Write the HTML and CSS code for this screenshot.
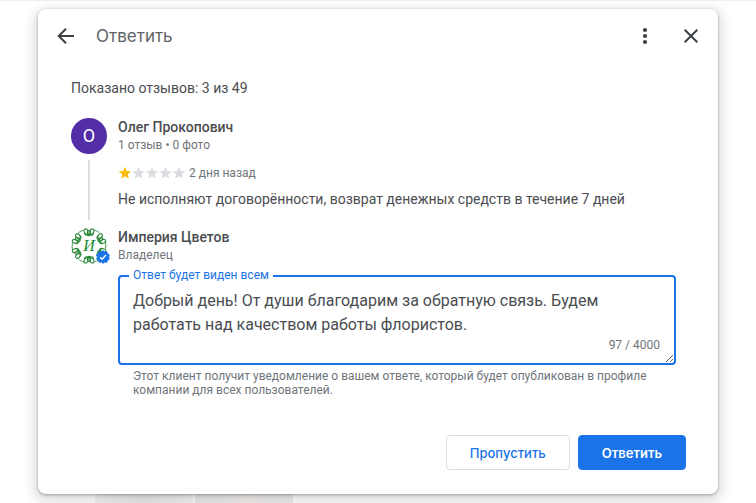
FILE: index.html
```html
<!DOCTYPE html>
<html lang="ru">
<head>
    <meta charset="UTF-8">
    <meta name="viewport" content="width=device-width, initial-scale=1.0">
    <title>Ответить</title>
    <link rel="stylesheet" href="styles.css">
</head>
<body>
    <main class="dialog">
        <header class="dialog-header">
            <button type="button" class="icon-btn" aria-label="Назад">
                <svg width="24" height="24" viewBox="0 0 24 24" fill="none" stroke="#3c4043" stroke-width="2"><path d="M20 12H5.500M12 4.700L4.700 12L12 19.300"/></svg>
            </button>
            <h1>Ответить</h1>
            <button type="button" class="icon-btn" aria-label="Ещё">
                <svg width="24" height="24" viewBox="0 0 24 24" fill="#3c4043"><circle cx="12" cy="6" r="2.100"/><circle cx="12" cy="12" r="2.100"/><circle cx="12" cy="18" r="2.100"/></svg>
            </button>
            <button type="button" class="icon-btn" aria-label="Закрыть">
                <svg width="24" height="24" viewBox="0 0 24 24" fill="none" stroke="#3c4043" stroke-width="2"><path d="M5.700 5.700L18.300 18.300M18.300 5.700L5.700 18.300"/></svg>
            </button>
        </header>

        <p class="summary">Показано отзывов: 3 из 49</p>

        <section class="entry">
            <div class="rail">
                <div class="avatar">О</div>
                <div class="thread-line"></div>
            </div>
            <div class="entry-body">
                <h2>Олег Прокопович</h2>
                <p class="meta">1 отзыв • 0 фото</p>
                <div class="rating">
                    <svg width="68" height="14" viewBox="0 0 68 14" fill="#dadce0" role="img" aria-label="Оценка: 1 из 5">
                        <defs><path id="star" d="M7 .8L8.700 5.100L13.300 5.400L9.700 8.300L10.900 12.800L7 10.300L3.100 12.800L4.300 8.300L.7 5.400L5.300 5.100Z"/></defs>
                        <use href="#star" fill="#fbbc04"/>
                        <use href="#star" x="13.500"/>
                        <use href="#star" x="27"/>
                        <use href="#star" x="40.500"/>
                        <use href="#star" x="54"/>
                    </svg>
                    <span>2 дня назад</span>
                </div>
                <p class="review-text">Не исполняют договорённости, возврат денежных средств в течение 7 дней</p>
            </div>
        </section>

        <section class="entry">
            <div class="rail">
                <div class="shop-logo">
                    <svg width="36" height="36" viewBox="0 0 36 36" fill="none" stroke="#2a8a3a" stroke-width="1.100">
                        <defs>
                            <g id="curl">
                                <path d="M13.500 4.500C13.500 7.800 18 8.200 18 5C18 8.200 22.500 7.800 22.500 4.500"/>
                                <ellipse cx="15" cy="3.500" rx="1.900" ry="2.700" transform="rotate(-20 15 3.500)"/>
                                <ellipse cx="21" cy="3.500" rx="1.900" ry="2.700" transform="rotate(20 21 3.500)"/>
                                <ellipse cx="18" cy="5" rx="1.600" ry="2.600"/>
                            </g>
                            <path id="arc" stroke-width=".8" d="M22.500 2C25 2.200 27 3.500 28.500 5.200"/>
                        </defs>
                        <use href="#curl"/>
                        <use href="#curl" transform="rotate(60 18 18)"/>
                        <use href="#curl" transform="rotate(120 18 18)"/>
                        <use href="#curl" transform="rotate(180 18 18)"/>
                        <use href="#curl" transform="rotate(240 18 18)"/>
                        <use href="#curl" transform="rotate(300 18 18)"/>
                        <use href="#arc"/>
                        <use href="#arc" transform="rotate(60 18 18)"/>
                        <use href="#arc" transform="rotate(120 18 18)"/>
                        <use href="#arc" transform="rotate(180 18 18)"/>
                        <use href="#arc" transform="rotate(240 18 18)"/>
                        <use href="#arc" transform="rotate(300 18 18)"/>
                        <text x="18" y="23" text-anchor="middle" class="logo-letter">И</text>
                    </svg>
                    <svg class="verified" width="14" height="14" viewBox="0 0 14 14">
                        <path fill="#1a73e8" stroke="#1a73e8" stroke-linejoin="round" d="M7 .7L8.700 2L10.800 1.700L11.500 3.700L13.300 4.900L12.600 7L13.300 9.100L11.500 10.300L10.800 12.300L8.700 12L7 13.300L5.300 12L3.200 12.300L2.500 10.300L.7 9.100L1.400 7L.7 4.900L2.500 3.700L3.200 1.700L5.300 2Z"/>
                        <path fill="none" stroke="#fff" stroke-width="1.400" d="M4 7.200L6 9.200L10 5"/>
                    </svg>
                </div>
            </div>
            <form class="entry-body" id="replyForm">
                <h2>Империя Цветов</h2>
                <p class="meta">Владелец</p>
                <div class="field">
                    <label for="reply">Ответ будет виден всем</label>
                    <textarea id="reply" name="reply" maxlength="4000" aria-describedby="replyHint">Добрый день! От души благодарим за обратную связь. Будем работать над качеством работы флористов.</textarea>
                    <span class="counter">97 / 4000</span>
                </div>
                <p class="hint" id="replyHint">Этот клиент получит уведомление о вашем ответе, который будет опубликован в профиле компании для всех пользователей.</p>
            </form>
        </section>

        <footer class="actions">
            <button type="button" class="btn">Пропустить</button>
            <button type="submit" form="replyForm" class="btn btn-primary">Ответить</button>
        </footer>
    </main>

    <div class="backdrop-photos">
        <div class="photo"></div>
        <div class="photo photo-warm"></div>
    </div>
</body>
</html>
```
FILE: styles.css
```css
* {
    box-sizing: border-box;
}

body {
    display: flex;
    flex-direction: column;
    min-height: 100vh;
    margin: 0;
    padding: 8px 38px 0;
    border-top: 1px solid #efefef;
    background-color: #fff;
    color: #4a4d51;
    font-family: Roboto, "Noto Sans", sans-serif;
    font-size: 14px;
    line-height: 20px;
}

h1, h2, p {
    margin: 0;
}

.dialog {
    position: relative;
    padding: 0 32px 24px 33px;
    border-radius: 8px;
    background-color: #fff;
    box-shadow: 0 1px 3px rgba(0, 0, 0, 0.3), 0 4px 12px 4px rgba(0, 0, 0, 0.13);
}

.dialog-header {
    display: flex;
    align-items: center;
    gap: 22px;
    height: 54px;
    margin: 0 -17px;
}

h1 {
    flex: 1;
    margin-left: -4px;
    color: #5f6368;
    font-family: Inter, "Noto Sans", sans-serif;
    font-size: 17px;
    font-weight: 400;
    line-height: 24px;
}

.icon-btn {
    display: flex;
    padding: 0;
    border: none;
    background: none;
    cursor: pointer;
}

.summary {
    padding: 15px 0 20px;
}

.entry {
    display: flex;
    gap: 11px;
}

.rail {
    display: flex;
    flex-direction: column;
    align-items: center;
    width: 36px;
}

.avatar {
    width: 36px;
    height: 36px;
    border-radius: 50%;
    background-color: #512da8;
    color: #fff;
    font-size: 18px;
    line-height: 36px;
    text-align: center;
}

.thread-line {
    flex: 1;
    width: 2px;
    margin: 6px 0 8px;
    background-color: #dadce0;
}

.entry-body {
    flex: 1;
    min-width: 0;
}

h2 {
    font-size: 14px;
    font-weight: 500;
    line-height: 18px;
}

.meta {
    color: #70757a;
    font-size: 12px;
    line-height: 18px;
}

.rating {
    display: flex;
    align-items: center;
    gap: 3px;
    margin-top: 10px;
    color: #70757a;
    font-size: 12px;
    line-height: 18px;
}

.review-text {
    padding: 7px 0 19px;
}

.shop-logo {
    position: relative;
    height: 36px;
}

.logo-letter {
    fill: #1e8a35;
    stroke: none;
    font-family: "Liberation Serif", serif;
    font-size: 16px;
    font-style: italic;
}

.verified {
    position: absolute;
    right: -3px;
    bottom: 0;
}

.field {
    position: relative;
    margin: 11px 10px 0 0;
}

.field label {
    position: absolute;
    top: -8px;
    left: 11px;
    padding: 0 4px;
    background-color: #fff;
    color: #1a73e8;
    font-size: 12px;
    line-height: 16px;
}

textarea {
    display: block;
    width: 100%;
    height: 90px;
    padding: 12px 13px;
    border: 2px solid #1a73e8;
    border-radius: 4px;
    outline: none;
    overflow: hidden;
    background-color: #fff;
    color: #4a4d51;
    font-family: inherit;
    font-size: 16px;
    line-height: 24px;
    resize: vertical;
}

.counter {
    position: absolute;
    right: 16px;
    bottom: 12px;
    color: #70757a;
    font-size: 12px;
    line-height: 16px;
}

.hint {
    padding: 4px 15px 0;
    color: #70757a;
    font-size: 12px;
    line-height: 14px;
}

.actions {
    display: flex;
    justify-content: flex-end;
    gap: 8px;
    margin-top: 38px;
}

.btn {
    height: 35px;
    padding: 0 23px;
    border: 1px solid #dadce0;
    border-radius: 4px;
    background-color: #fff;
    color: #1a73e8;
    font-family: Inter, "Noto Sans", sans-serif;
    font-size: 13px;
    font-weight: 500;
    cursor: pointer;
}

.btn-primary {
    border-color: #1a73e8;
    background-color: #1a73e8;
    color: #fff;
    font-weight: 600;
}

.backdrop-photos {
    display: flex;
    flex: 1;
    gap: 2px;
    min-height: 9px;
    padding-left: 57px;
}

.photo {
    width: 98px;
    background: linear-gradient(100deg, #f2f3f3, #eaeaeb 50%, #f3f3f3);
}

.photo-warm {
    background: linear-gradient(100deg, #eaeaea, #f3f0ee 55%, #ededed);
}
```
